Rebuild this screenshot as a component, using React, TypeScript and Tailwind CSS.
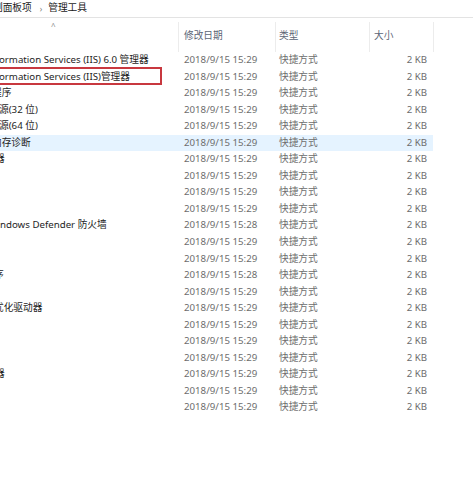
import React from 'react';

type Row = { name: string; offset: string; time: string; active?: boolean };

const ROWS: Row[] = [
  { name: 'ormation Services (IIS) 6.0 管理器', offset: 'ml-[-1px]', time: '15:29' },
  { name: 'ormation Services (IIS)管理器', offset: 'ml-[-1px]', time: '15:29' },
  { name: '程序', offset: 'ml-[-8px]', time: '15:29' },
  { name: '源(32 位)', offset: 'ml-[-1px]', time: '15:29' },
  { name: '源(64 位)', offset: 'ml-[-1px]', time: '15:29' },
  { name: '内存诊断', offset: 'ml-[-8px]', time: '15:29', active: true },
  { name: '器', offset: 'ml-[-5px]', time: '15:29' },
  { name: '', offset: '', time: '15:29' },
  { name: '', offset: '', time: '15:29' },
  { name: '', offset: '', time: '15:29' },
  { name: 'ndows Defender 防火墙', offset: 'ml-[0px]', time: '15:28' },
  { name: '', offset: '', time: '15:29' },
  { name: '', offset: '', time: '15:29' },
  { name: '序', offset: 'ml-[-6px]', time: '15:28' },
  { name: '', offset: '', time: '15:29' },
  { name: '优化驱动器', offset: 'ml-[-6px]', time: '15:29' },
  { name: '', offset: '', time: '15:29' },
  { name: '', offset: '', time: '15:29' },
  { name: '', offset: '', time: '15:29' },
  { name: '器', offset: 'ml-[-5px]', time: '15:29' },
  { name: '', offset: '', time: '15:29' },
  { name: '', offset: '', time: '15:29' },
];

const FONT = "font-['Noto_Sans','Noto_Sans_CJK_SC',sans-serif]";

export default function App() {
  return (
    <div className={`relative w-[473px] h-[477px] overflow-hidden bg-white text-[9.7px] ${FONT}`}>
      {/* Breadcrumb bar */}
      <div className="h-[18px] flex items-center border-b border-[#e3e3e3] text-[#1b1b1b]">
        <span className="ml-[-7px] whitespace-nowrap">制面板项</span>
        <span className="ml-[8px] text-[8px] text-[#777]">›</span>
        <span className="ml-[6px] whitespace-nowrap">管理工具</span>
      </div>

      {/* Column header */}
      <div className="relative flex h-[34px] text-[#5b6576]">
        <div className="w-[178px] relative">
          <span className="absolute left-[51px] top-[2px] text-[8px] text-[#8a8a8a]">^</span>
        </div>
        <div className="w-[97px] border-l border-[#ececec] mt-[4px] pl-[5px] pt-[7px]">修改日期</div>
        <div className="w-[94px] border-l border-[#ececec] mt-[4px] pl-[3px] pt-[7px]">类型</div>
        <div className="w-[64px] border-l border-[#ececec] mt-[4px] pl-[4px] pt-[7px]">大小</div>
        <div className="w-[40px] border-l border-[#ececec] mt-[4px]" />
      </div>

      {/* Rows */}
      <div className="flex flex-col">
        {ROWS.map((r, i) => (
          <div
            key={i}
            className={`flex w-[433px] h-[16.55px] items-center ${r.active ? 'bg-[#e5f3ff]' : ''}`}
          >
            <div className="w-[178px] overflow-hidden whitespace-nowrap text-[#1e1e1e]">
              <span className={`inline-block ${r.offset}`}>{r.name}</span>
            </div>
            <div className="w-[97px] pl-[6px] text-[#6d6d6d] whitespace-nowrap">2018/9/15 {r.time}</div>
            <div className="w-[94px] pl-[4px] text-[#6d6d6d] whitespace-nowrap">快捷方式</div>
            <div className="w-[64px] pr-[6px] text-right text-[#6d6d6d] whitespace-nowrap">2 KB</div>
          </div>
        ))}
      </div>

      {/* Red annotation box */}
      <div className="absolute left-[-2px] top-[67px] w-[164px] h-[18px] border-2 border-[#c8383f]" />
    </div>
  );
}
